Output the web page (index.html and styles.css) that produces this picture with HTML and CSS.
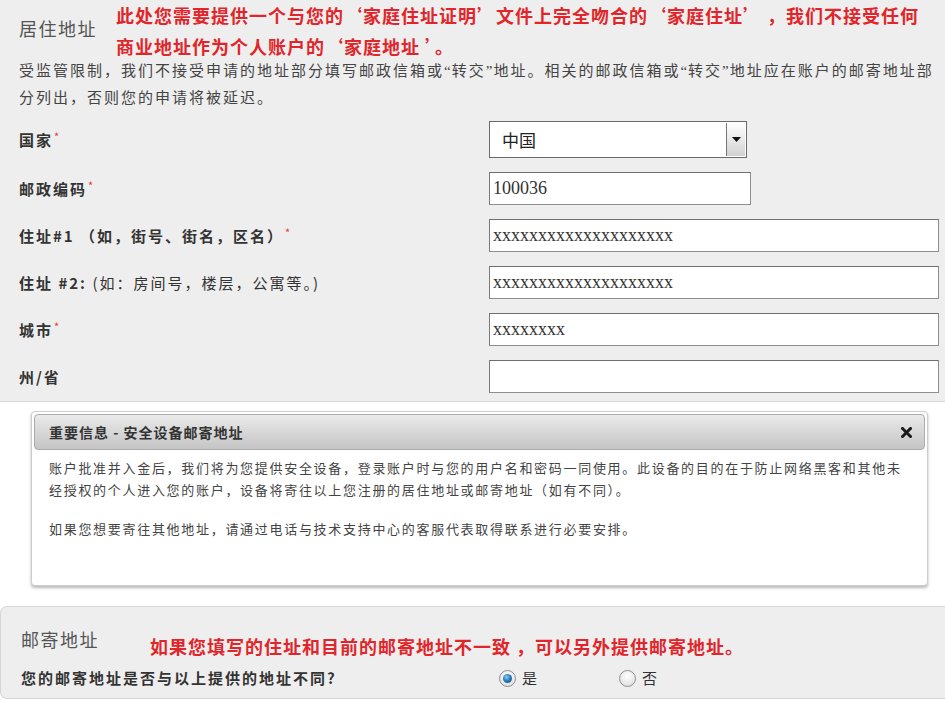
FILE: index.html
```html
<!DOCTYPE html>
<html lang="zh-CN">
<head>
<meta charset="utf-8">
<title>居住地址</title>
<link rel="stylesheet" href="styles.css">
</head>
<body>
<section class="residence">
  <div class="res-head">
    <h2 class="sec-title">居住地址</h2>
    <p class="note">此处您需要提供一个与您的‘家庭住址证明’文件上完全吻合的‘家庭住址’ ，我们不接受任何<br>商业地址作为个人账户的‘家庭地址 ’。</p>
  </div>
  <p class="desc">受监管限制，我们不接受申请的地址部分填写邮政信箱或<span class="qm">“</span>转交<span class="qm">”</span>地址。相关的邮政信箱或<span class="qm">“</span>转交<span class="qm">”</span>地址应在账户的邮寄地址部<br>分列出，否则您的申请将被延迟。</p>
  <div class="form">
    <div class="row">
      <label class="lbl">国家<span class="req">*</span></label>
      <div class="select">
        <span class="val">中国</span>
        <span class="arrow"><svg width="9" height="5" viewBox="0 0 9 5"><path d="M0 0H9L4.5 5Z" fill="#111"/></svg></span>
      </div>
    </div>
    <div class="row">
      <label class="lbl">邮政编码<span class="req">*</span></label>
      <input class="input short" type="text" value="100036">
    </div>
    <div class="row">
      <label class="lbl">住址#1 （如，街号、街名，区名）<span class="req">*</span></label>
      <input class="input" type="text" value="xxxxxxxxxxxxxxxxxxxx">
    </div>
    <div class="row">
      <label class="lbl">住址 #2: <span class="thin">(如：房间号，楼层，公寓等。)</span></label>
      <input class="input" type="text" value="xxxxxxxxxxxxxxxxxxxx">
    </div>
    <div class="row">
      <label class="lbl">城市<span class="req">*</span></label>
      <input class="input" type="text" value="xxxxxxxx">
    </div>
    <div class="row">
      <label class="lbl">州/省</label>
      <input class="input" type="text" value="">
    </div>
  </div>
</section>

<div class="overlay-zone">
  <div class="dialog">
    <div class="dlg-head">
      <span class="dlg-title">重要信息 - 安全设备邮寄地址</span>
      <svg class="close" width="11" height="11" viewBox="0 0 11 11"><path d="M1.5 1.5L9.5 9.5M9.5 1.5L1.5 9.5" stroke="#1a1a1a" stroke-width="3" stroke-linecap="square"/></svg>
    </div>
    <div class="dlg-body">
      <p>账户批准并入金后，我们将为您提供安全设备，登录账户时与您的用户名和密码一同使用。此设备的目的在于防止网络黑客和其他未<br>经授权的个人进入您的账户，设备将寄往以上您注册的居住地址或邮寄地址（如有不同）。</p>
      <p>如果您想要寄往其他地址，请通过电话与技术支持中心的客服代表取得联系进行必要安排。</p>
    </div>
  </div>
</div>

<section class="mailing">
  <div class="mail-head">
    <h2 class="sec-title mail-title">邮寄地址</h2>
    <p class="note mail-note">如果您填写的住址和目前的邮寄地址不一致 ，可以另外提供邮寄地址。</p>
  </div>
  <div class="q-row">
    <span class="q">您的邮寄地址是否与以上提供的地址不同?</span>
    <div class="radios">
      <label class="radio"><span class="dot on"></span>是</label>
      <label class="radio"><span class="dot"></span>否</label>
    </div>
  </div>
</section>
</body>
</html>
```

FILE: styles.css
```css
body {
  margin: 0;
  background: #fff;
  font-family: "Noto Sans CJK SC", "Liberation Sans", sans-serif;
}

.residence {
  background: #eeeeee;
  border-bottom: 1px solid #d6d6d6;
  padding: 0 6px 8px 19px;
}

.res-head {
  display: flex;
  align-items: flex-start;
}

.sec-title {
  margin: 18px 0 0;
  width: 97px;
  font-size: 18px;
  font-weight: normal;
  line-height: 20px;
  color: #555;
  letter-spacing: 1.5px;
  white-space: nowrap;
}

.note {
  margin: 0;
  color: #e1262b;
  font-weight: bold;
  font-size: 18px;
  line-height: 31px;
  letter-spacing: 1px;
  white-space: nowrap;
}

.desc {
  margin: -5px 0 0;
  font-size: 15px;
  line-height: 26px;
  color: #444;
  letter-spacing: 2px;
  white-space: nowrap;
}

.qm {
  font-family: "Liberation Serif", serif;
  letter-spacing: 1px;
}

.form {
  margin-top: 11px;
  display: flex;
  flex-direction: column;
  gap: 14px;
}

.row {
  display: grid;
  grid-template-columns: 470px 1fr;
  align-items: center;
}

.lbl {
  font-size: 15px;
  font-weight: bold;
  color: #333;
  letter-spacing: 2px;
  white-space: nowrap;
}

.lbl .thin {
  font-weight: normal;
  letter-spacing: 2px;
}

.req {
  color: #e33;
  font-size: 11px;
  font-weight: normal;
  vertical-align: top;
  line-height: 14px;
  margin-left: 1px;
}

.select {
  width: 258px;
  height: 37px;
  box-sizing: border-box;
  border: 1px solid #6a6a6a;
  background: #fff;
  display: flex;
}

.select .val {
  flex: 1;
  padding-left: 12px;
  font-size: 17px;
  line-height: 35px;
  color: #222;
}

.select .arrow {
  width: 18px;
  margin: 1px 1px 1px 0;
  border-left: 1px solid #777;
  background: linear-gradient(#ffffff, #d2d2d2);
  display: flex;
  align-items: center;
  justify-content: center;
}

.input {
  height: 33px;
  width: 100%;
  box-sizing: border-box;
  margin: 0;
  border: 1px solid #8e8e8e;
  border-top-color: #6f6f6f;
  border-left-color: #7a7a7a;
  background: #fff;
  font-family: "Liberation Serif", serif;
  font-size: 18px;
  color: #333;
  padding: 0 3px;
  outline: none;
}

.input.short {
  width: 262px;
}

.overlay-zone {
  padding: 9px 0 20px 31px;
}

.dialog {
  width: 897px;
  height: 175px;
  box-sizing: border-box;
  border: 1px solid #cdcdcd;
  border-radius: 4px;
  box-shadow: 0 2px 3px rgba(0, 0, 0, 0.28);
  padding: 2px;
  background: #fff;
}

.dlg-head {
  height: 36px;
  box-sizing: border-box;
  border: 1px solid #acacac;
  border-radius: 4px;
  background: linear-gradient(#eaeaea, #c5c5c5);
  display: flex;
  align-items: center;
  justify-content: space-between;
  padding: 0 12px 0 14px;
}

.dlg-title {
  font-size: 14px;
  font-weight: bold;
  color: #333;
  letter-spacing: 1px;
}

.dlg-body {
  padding: 7px 14px 0 15px;
  font-size: 13px;
  line-height: 22px;
  color: #444;
  letter-spacing: 1.7px;
  white-space: nowrap;
}

.dlg-body p {
  margin: 0;
}

.dlg-body p + p {
  margin-top: 17px;
}

.mailing {
  background: #eeeeee;
  border: 1px solid #d6d6d6;
  border-right: none;
  border-radius: 7px 0 0 7px;
  padding: 20px 0 8px 20px;
}

.mail-head {
  display: flex;
  align-items: flex-start;
}

.mail-title {
  margin: 0;
  width: 129px;
  line-height: 24px;
}

.mail-note {
  margin-top: 7px;
  line-height: 24px;
}

.q-row {
  margin-top: 8px;
  display: grid;
  grid-template-columns: 478px auto;
  align-items: center;
  line-height: 24px;
}

.q {
  font-size: 15px;
  font-weight: bold;
  color: #333;
  letter-spacing: 2px;
  white-space: nowrap;
}

.radios {
  display: flex;
}

.radio {
  width: 120px;
  display: flex;
  align-items: center;
  gap: 6px;
  font-size: 15px;
  color: #333;
}

.dot {
  width: 17px;
  height: 17px;
  box-sizing: border-box;
  border-radius: 50%;
  border: 1px solid #8f8f8f;
  background: radial-gradient(circle at 50% 35%, #ffffff, #d8d8d8);
  display: flex;
  align-items: center;
  justify-content: center;
}

.dot.on::after {
  content: "";
  width: 9px;
  height: 9px;
  border-radius: 50%;
  background: radial-gradient(circle at 40% 35%, #8fd0f4, #2a7fbf 45%, #0e3f6c);
}
```
